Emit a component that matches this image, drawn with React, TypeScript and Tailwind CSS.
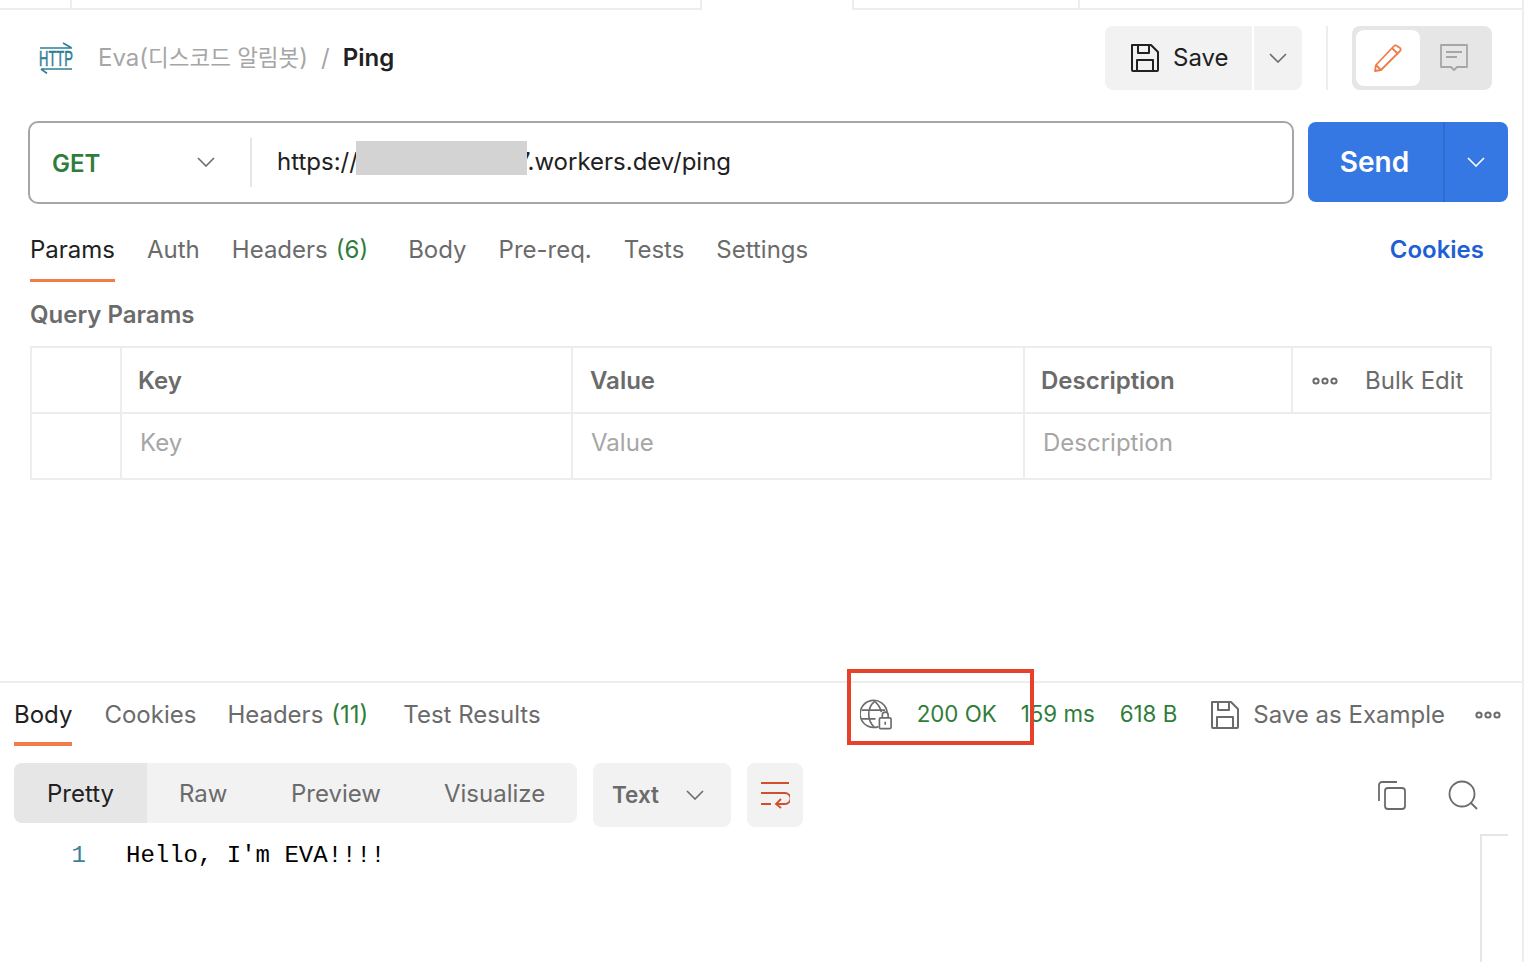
import type { ReactNode } from "react";

const font = { fontFamily: 'Inter, "Noto Sans CJK KR", sans-serif' };

function Chevron({ className }: { className: string }) {
  return (
    <svg className={className} width="18" height="10" viewBox="0 0 18 10" fill="none" stroke="currentColor" strokeWidth="1.6">
      <path d="M1 1l8 8 8-8" />
    </svg>
  );
}

function SaveIcon({ className }: { className: string }) {
  return (
    <svg className={className} width="30" height="30" viewBox="0 0 30 30" fill="none" stroke="currentColor" strokeWidth="2" strokeLinejoin="round">
      <path d="M2 2h19l7 7v18a1 1 0 0 1-1 1H3a1 1 0 0 1-1-1V2z" />
      <path d="M8 2v8h11V2" />
      <path d="M7 28V17h16v11" />
    </svg>
  );
}

function HttpIcon() {
  return (
    <svg width="36" height="32" viewBox="0 0 36 32" fill="none" stroke="#2f7f96" strokeWidth="1.6">
      <path d="M2 6h32M25 1l8 4.5" />
      <path d="M3 27h31M3 27l6 4.5" />
      <text
        x="1"
        y="14.2"
        transform="scale(1 1.7)"
        fontFamily='"Liberation Sans", sans-serif'
        fontSize="13"
        fill="#2f7f96"
        stroke="#2f7f96"
        strokeWidth="0.35"
      >
        HTTP
      </text>
    </svg>
  );
}

function Dots({ width }: { width: number }) {
  return (
    <svg width={width} height="8" viewBox="0 0 26 8" fill="none" stroke="#6b6b6b" strokeWidth="2">
      <circle cx="4" cy="4" r="2.6" />
      <circle cx="13" cy="4" r="2.6" />
      <circle cx="22" cy="4" r="2.6" />
    </svg>
  );
}

function Tab({ label, count, active, gap }: { label: string; count?: string; active?: boolean; gap: string }) {
  return (
    <div className={`relative h-full flex items-center ${gap} ${active ? "text-[#212121]" : "text-[#6b6b6b]"}`}>
      <span>
        {label}
        {count && <span className="text-[#2f7d3b] ml-[8px]">{count}</span>}
      </span>
    </div>
  );
}

function Cell({ className, children }: { className: string; children?: ReactNode }) {
  return <div className={`flex items-center h-full border-r-2 border-[#ededed] ${className}`}>{children}</div>;
}

export default function App() {
  return (
    <div style={font} className="relative w-[1526px] h-[962px] overflow-hidden bg-white text-[24px] leading-none">
      {/* window right edge */}
      <div className="absolute top-0 bottom-0 left-[1522px] w-[2px] bg-[#ededed]" />

      {/* tab strip */}
      <div className="flex h-[10px] w-[1522px]">
        <div className="w-[72px] border-b-2 border-r-2 border-[#ededed]" />
        <div className="w-[630px] border-b-2 border-r-2 border-[#ededed]" />
        <div className="w-[152px] border-r-2 border-[#ededed]" />
        <div className="w-[226px] border-b-2 border-r-2 border-[#ededed]" />
        <div className="flex-1 border-b-2 border-[#ededed]" />
      </div>

      {/* header */}
      <div className="flex items-center h-[96px] pl-[38px] pr-[34px]">
        <HttpIcon />
        <span className="ml-[24px] text-[#a6a6a6]">
          Eva(<span className="text-[22.5px]">디스코드 알림봇</span>)
        </span>
        <span className="ml-[13px] text-[#a6a6a6]">/</span>
        <span className="ml-[13px] font-semibold text-[#212121]">Ping</span>
        <div className="ml-auto flex items-center h-[64px]">
          <div className="flex items-center h-full w-[147px] pl-[25px] bg-[#f2f2f2] rounded-l-[8px] text-[#212121]">
            <SaveIcon className="text-[#212121]" />
            <span className="ml-[13px]">Save</span>
          </div>
          <div className="flex items-center justify-center h-full w-[48px] ml-[2px] bg-[#f2f2f2] rounded-r-[8px] text-[#6b6b6b]">
            <Chevron className="" />
          </div>
          <div className="w-[2px] h-full ml-[24px] bg-[#ededed]" />
          <div className="flex items-center h-full w-[140px] ml-[24px] p-[4px] bg-[#e6e6e6] rounded-[8px]">
            <div className="flex items-center justify-center w-[64px] h-[56px] bg-white rounded-[8px]">
              <svg width="30" height="30" viewBox="0 0 30 30" fill="none" stroke="#f07c4a" strokeWidth="1.8" strokeLinejoin="round">
                <path d="M2 28l1-6L21 3a2 2 0 0 1 3 0l3 2a2 2 0 0 1 0 3L8 27l-6 1z" />
                <path d="M3 22l5 5M19 5l6 6" />
              </svg>
            </div>
            <div className="flex items-center justify-center flex-1">
              <svg width="28" height="28" viewBox="0 0 28 28" fill="none" stroke="#a6a6a6" strokeWidth="1.8" strokeLinejoin="round">
                <path d="M1 1h26v22H17l-3 3-3-3H1V1z" />
                <path d="M6 8h16M6 13h11" />
              </svg>
            </div>
          </div>
        </div>
      </div>

      {/* request line */}
      <div className="flex items-center h-[84px] ml-[28px] mt-[14px] w-[1480px]">
        <div className="flex items-center h-[83px] w-[1266px] border-2 border-[#a6a6a6] rounded-[10px]">
          <div className="flex items-center w-[222px] h-[49px] pl-[22px] pr-[35px] border-r-2 border-[#e6e6e6]">
            <span className="font-semibold text-[#2f7d3b] mt-[3px]">GET</span>
            <Chevron className="ml-auto text-[#6b6b6b]" />
          </div>
          <div className="flex items-center pl-[25px] text-[#212121]">
            <span>https://</span>
            <span className="relative -top-[4px] z-10 inline-block w-[171px] h-[34px] -ml-[2px] -mr-[10px] bg-[#d3d3d3]" />
            <span>7.workers.dev/ping</span>
          </div>
        </div>
        <div className="flex items-center h-[80px] w-[200px] ml-[14px] bg-[#3678e3] rounded-[8px] text-white">
          <div className="flex items-center justify-center w-[137px] pr-[2px] h-full border-r-2 border-[#2f6ccf] text-[28px] font-semibold">Send</div>
          <div className="flex items-center justify-center flex-1 pr-[2px]">
            <Chevron className="" />
          </div>
        </div>
      </div>

      {/* request tabs */}
      <div className="relative flex items-center h-[66px] mt-[13px] pl-[30px] pr-[42px]">
        <Tab label="Params" active gap="mr-[32px]" />
        <Tab label="Auth" gap="mr-[32px]" />
        <Tab label="Headers" count="(6)" gap="mr-[40px]" />
        <Tab label="Body" gap="mr-[32px]" />
        <Tab label="Pre-req." gap="mr-[32px]" />
        <Tab label="Tests" gap="mr-[32px]" />
        <Tab label="Settings" gap="" />
        <span className="ml-auto font-semibold text-[#1f5fd6]">Cookies</span>
        <div className="absolute left-[30px] bottom-[1px] w-[85px] h-[3px] bg-[#f07c4a]" />
      </div>

      {/* query params */}
      <div className="mt-[20px] pl-[30px] h-[30px] font-semibold text-[#6b6b6b]">Query Params</div>
      <div className="mt-[13px] ml-[30px] w-[1462px] h-[134px] border-2 border-[#ededed] flex flex-col">
        <div className="flex h-[66px] border-b-2 border-[#ededed] font-semibold text-[#6b6b6b]">
          <Cell className="w-[90px]" />
          <Cell className="w-[451px] pl-[16px] pt-[2px]">Key</Cell>
          <Cell className="w-[452px] pl-[17px] pt-[2px]">Value</Cell>
          <Cell className="w-[268px] pl-[16px] pt-[2px]">Description</Cell>
          <div className="flex items-center flex-1 pl-[19px] pt-[1px] font-normal">
            <Dots width={26} />
            <span className="ml-[27px]">Bulk Edit</span>
          </div>
        </div>
        <div className="flex flex-1 text-[#a6a6a6]">
          <Cell className="w-[90px]" />
          <Cell className="w-[451px] pl-[18px] pb-[6px]">Key</Cell>
          <Cell className="w-[452px] pl-[18px] pb-[6px]">Value</Cell>
          <div className="flex items-center flex-1 pl-[18px] pb-[6px]">Description</div>
        </div>
      </div>

      {/* response */}
      <div className="relative mt-[201px] w-[1522px] h-[280px] border-t-2 border-[#ededed]">
        <div className="flex items-center h-[63px] pl-[14px] pr-[20px]">
          <Tab label="Body" active gap="mr-[32px]" />
          <Tab label="Cookies" gap="mr-[31px]" />
          <Tab label="Headers" count="(11)" gap="mr-[35px]" />
          <Tab label="Test Results" gap="" />
          <div className="ml-auto flex items-center">
            <svg width="33" height="32" viewBox="0 0 34 32" fill="none" stroke="#6b6b6b" strokeWidth="1.7">
              <path d="M19 28a14 14 0 1 1 9-15" />
              <path d="M15 2c-8 7-8 19 0 27M15 2c4 3 6 7 7 11" />
              <path d="M2 11h24M2 20h14" />
              <rect x="20" y="19" width="12" height="11" rx="1.5" />
              <path d="M23 19v-3a3 3 0 0 1 6 0v3M26 23v3" />
            </svg>
            <span className="ml-[24px] text-[22.3px] text-[#2f7d3b]">200 OK</span>
            <span className="ml-[24px] text-[22.3px] text-[#2f7d3b]">159 ms</span>
            <span className="ml-[25px] text-[22.3px] text-[#2f7d3b]">618 B</span>
            <SaveIcon className="ml-[33px] text-[#6b6b6b]" />
            <span className="ml-[13px] text-[#6b6b6b]">Save as Example</span>
            <div className="ml-[29px]">
              <Dots width={28} />
            </div>
          </div>
        </div>
        <div className="absolute left-[14px] top-[59px] w-[58px] h-[4px] bg-[#f07c4a]" />

        <div className="flex items-start mt-[17px] pl-[14px] pr-[44px]">
          <div className="flex h-[60px] w-[563px] pt-[1px] bg-[#f2f2f2] rounded-[8px] overflow-hidden text-[#6b6b6b]">
            <div className="flex items-center justify-center w-[133px] -mt-[1px] pt-[1px] bg-[#e6e6e6] text-[#212121]">Pretty</div>
            <div className="flex items-center pl-[32px] w-[144px]">Raw</div>
            <div className="flex items-center w-[153px]">Preview</div>
            <div className="flex items-center">Visualize</div>
          </div>
          <div className="flex items-center h-[64px] w-[138px] ml-[16px] pl-[19px] pr-[27px] bg-[#f2f2f2] rounded-[8px] text-[22.5px] font-semibold text-[#6b6b6b]">
            Text
            <Chevron className="ml-auto" />
          </div>
          <div className="flex items-center justify-center h-[64px] w-[56px] ml-[16px] bg-[#f2f2f2] rounded-[8px]">
            <svg width="30" height="28" viewBox="0 0 30 28" fill="none" stroke="#d0502b" strokeWidth="1.8">
              <path d="M1 2h28M1 12h24a4 4 0 0 1 0 11h-8M1 23h10" />
              <path d="M21 18l-5 5 5 4" />
            </svg>
          </div>
          <div className="ml-auto flex items-center gap-[41px] h-[64px]">
            <svg width="30" height="30" viewBox="0 0 30 30" fill="none" stroke="#6b6b6b" strokeWidth="1.8" strokeLinejoin="round">
              <path d="M20 2H5a3 3 0 0 0-3 3v16" />
              <rect x="8" y="8" width="20" height="21" rx="3" />
            </svg>
            <svg width="30" height="30" viewBox="0 0 30 30" fill="none" stroke="#6b6b6b" strokeWidth="1.8">
              <circle cx="14" cy="14" r="12.5" />
              <path d="M23 23l6 6" />
            </svg>
          </div>
        </div>

        <div className="flex items-center h-[30px] mt-[14px] text-[24px]" style={{ fontFamily: '"Liberation Mono", monospace' }}>
          <span className="w-[126px] pr-[40px] text-right text-[#3d7f9c]">1</span>
          <span className="text-black whitespace-pre">Hello, I'm EVA!!!!</span>
        </div>

        {/* minimap */}
        <div className="absolute left-[1480px] top-[151px] w-[28px] h-[140px] border-l-2 border-t-2 border-[#e6e6e6]" />
      </div>

      {/* annotation */}
      <div className="absolute left-[847px] top-[669px] w-[187px] h-[76px] border-[4px] border-[#e8412a]" />
    </div>
  );
}
